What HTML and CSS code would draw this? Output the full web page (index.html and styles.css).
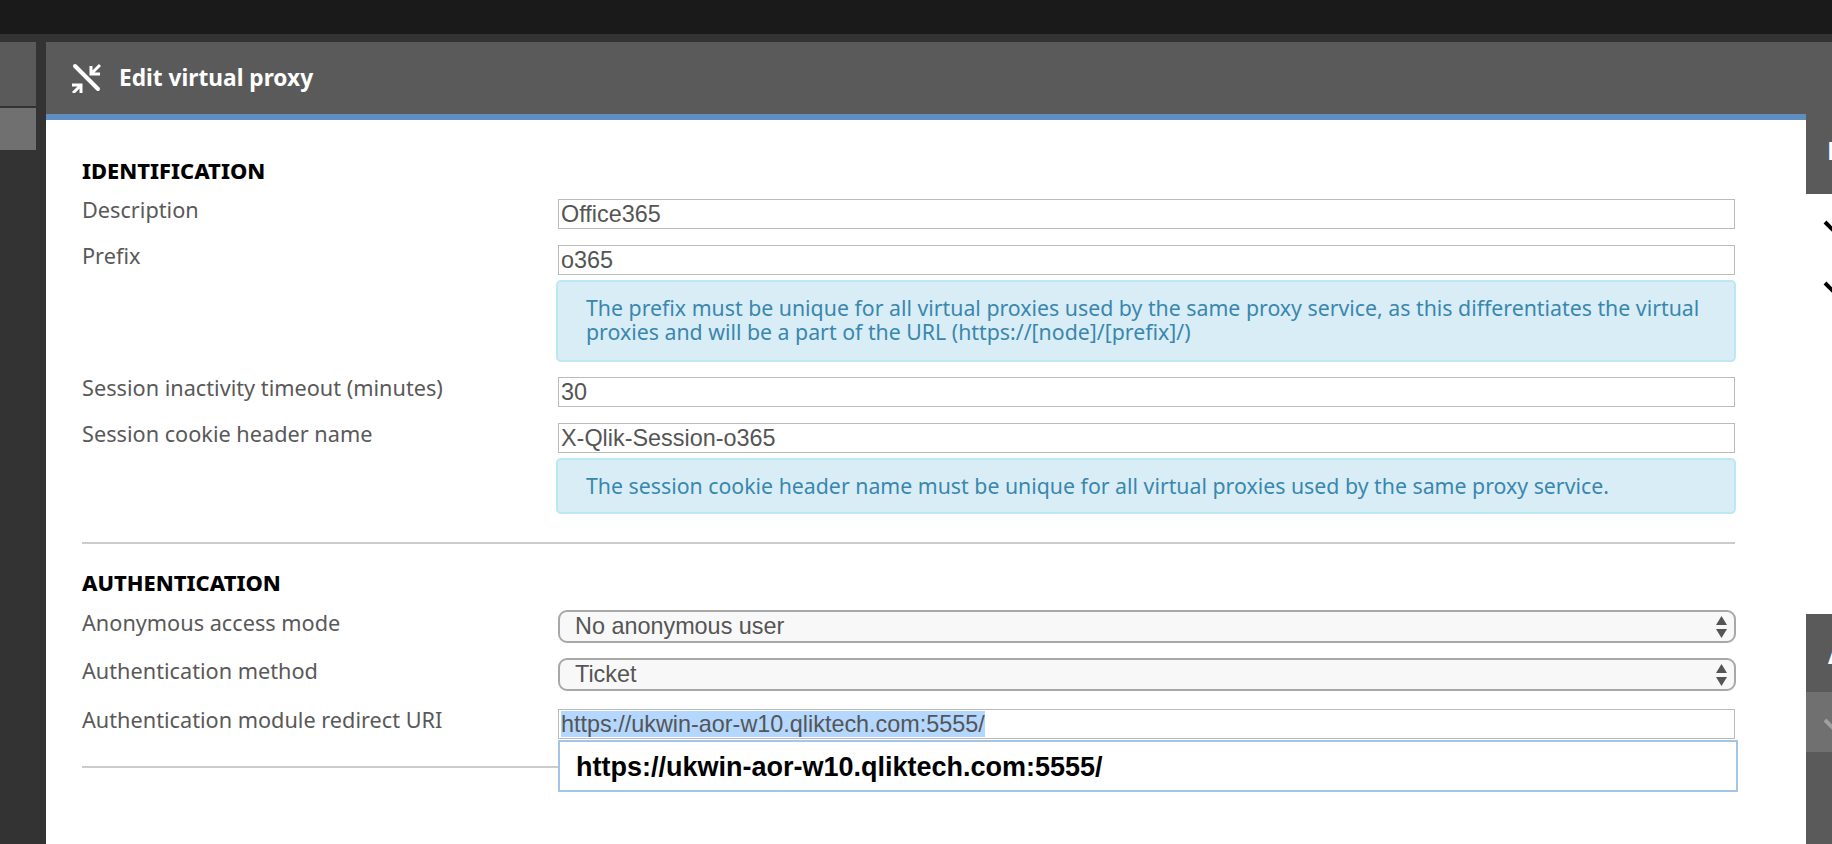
FILE: index.html
```html
<!DOCTYPE html>
<html lang="en">
<head>
    <meta charset="UTF-8">
    <meta name="viewport" content="width=device-width, initial-scale=1.0">
    <title>Edit virtual proxy</title>
    <link rel="stylesheet" href="styles.css">
</head>
<body>
    <div class="top-bar"></div>
    <div class="workspace">
        <div class="left-rail">
            <div class="left-tile"></div>
            <div class="left-tile active"></div>
        </div>

        <main class="panel">
            <header class="panel-header">
                <svg class="panel-icon" width="30" height="30" viewBox="0 0 30 30" fill="none" stroke="#fff" stroke-width="3">
                    <path d="M4 3 L27 26" stroke-width="4" stroke-linecap="round"/>
                    <path d="M20 3 V11 H29 M20 11 L29 2"/>
                    <path d="M1 22 H10 V30 M10 22 L2 30"/>
                </svg>
                <h1>Edit virtual proxy</h1>
            </header>

            <div class="panel-body">
                <section class="form-section">
                    <h2>IDENTIFICATION</h2>
                    <div class="form-row">
                        <label>Description</label>
                        <div class="field-col">
                            <div class="text-field">Office365</div>
                        </div>
                    </div>
                    <div class="form-row note-row">
                        <label>Prefix</label>
                        <div class="field-col">
                            <div class="text-field">o365</div>
                            <div class="note note-tall">The prefix must be unique for all virtual proxies used by the same proxy service, as this differentiates the virtual proxies and will be a part of the URL (https://[node]/[prefix]/)</div>
                        </div>
                    </div>
                    <div class="form-row">
                        <label>Session inactivity timeout (minutes)</label>
                        <div class="field-col">
                            <div class="text-field">30</div>
                        </div>
                    </div>
                    <div class="form-row note-row">
                        <label>Session cookie header name</label>
                        <div class="field-col">
                            <div class="text-field">X-Qlik-Session-o365</div>
                            <div class="note">The session cookie header name must be unique for all virtual proxies used by the same proxy service.</div>
                        </div>
                    </div>
                </section>

                <section class="form-section auth-section">
                    <h2>AUTHENTICATION</h2>
                    <div class="form-row select-row">
                        <label>Anonymous access mode</label>
                        <div class="field-col">
                            <div class="select-field">
                                <span>No anonymous user</span>
                                <svg width="11" height="22" viewBox="0 0 11 22" fill="#555"><path d="M5.5 0 L11 9 H0 Z M0 13 H11 L5.5 22 Z"/></svg>
                            </div>
                        </div>
                    </div>
                    <div class="form-row select-row">
                        <label>Authentication method</label>
                        <div class="field-col">
                            <div class="select-field">
                                <span>Ticket</span>
                                <svg width="11" height="22" viewBox="0 0 11 22" fill="#555"><path d="M5.5 0 L11 9 H0 Z M0 13 H11 L5.5 22 Z"/></svg>
                            </div>
                        </div>
                    </div>
                    <div class="form-row redirect-row">
                        <label>Authentication module redirect URI</label>
                        <div class="field-col">
                            <div class="text-field"><span class="selected-text">https://ukwin-aor-w10.qliktech.com:5555/</span></div>
                            <div class="autocomplete">https://ukwin-aor-w10.qliktech.com:5555/</div>
                        </div>
                    </div>
                </section>
            </div>
        </main>

        <aside class="right-rail">
            <div class="rail-tile rail-top">E</div>
            <div class="rail-list">
                <svg class="rail-chevron" width="26" height="26" viewBox="0 0 26 26" fill="none" stroke="#000" stroke-width="4"><path d="M19 2 L30 13 L41 2"/></svg>
                <svg class="rail-chevron" width="26" height="26" viewBox="0 0 26 26" fill="none" stroke="#000" stroke-width="4"><path d="M19 2 L30 13 L41 2"/></svg>
            </div>
            <div class="rail-tile rail-a">A</div>
            <div class="rail-tile rail-light">
                <svg class="rail-chevron" width="26" height="26" viewBox="0 0 26 26" fill="none" stroke="#a0a0a0" stroke-width="4"><path d="M19 2 L30 13 L41 2"/></svg>
            </div>
            <div class="rail-tile rail-rest"></div>
        </aside>
    </div>
</body>
</html>
```
FILE: styles.css
```css
html, body {
    height: 844px;
    overflow: hidden;
}
body {
    margin: 0;
    background-color: #333333;
    font-family: "Noto Sans", Arial, sans-serif;
}
.top-bar {
    height: 34px;
    background-color: #1a1a1a;
}
.workspace {
    display: flex;
    height: 802px;
    margin-top: 8px;
}

/* left stubs */
.left-rail {
    width: 36px;
    margin-right: 10px;
    display: flex;
    flex-direction: column;
    gap: 2px;
}
.left-tile {
    height: 64px;
    background-color: #5a5a5a;
}
.left-tile.active {
    height: 42px;
    background-color: #707070;
}

/* main panel */
.panel {
    width: 1760px;
    background-color: white;
}
.panel-header {
    height: 72px;
    background-color: #5a5a5a;
    border-bottom: 6px solid #5f8fc0;
    display: flex;
    align-items: center;
    padding-left: 25px;
}
.panel-icon {
    margin-right: 18px;
}
.panel-header h1 {
    margin: 0 0 2px;
    font-size: 22.7px;
    font-weight: 700;
    color: white;
}
.panel-body {
    padding: 38px 71px 0 36px;
}
.form-section h2 {
    margin: 0;
    height: 41px;
    line-height: 26px;
    font-size: 21.9px;
    font-weight: 800;
    color: black;
}
.auth-section {
    margin-top: 28px;
    border-top: 2px solid #cccccc;
    border-bottom: 2px solid #cccccc;
    padding: 26px 0 27px;
}
.auth-section h2 {
    height: 40px;
}
.form-row {
    display: flex;
    margin-bottom: 16px;
}
.form-row label {
    width: 476px;
    flex-shrink: 0;
    font-size: 21.7px;
    line-height: 24px;
    color: #595959;
    margin-top: -1px;
}
.note-row {
    margin-bottom: 15px;
}
.field-col {
    flex: 1;
    position: relative;
}
.text-field {
    height: 30px;
    box-sizing: border-box;
    border: 1px solid #bbbbbb;
    padding: 0 1px 0 2px;
    font-family: "Liberation Sans", Arial, sans-serif;
    font-size: 23.4px;
    line-height: 28px;
    color: #555555;
}
.note {
    box-sizing: border-box;
    height: 56px;
    margin: 5px -1px 0 -2px;
    padding: 14px 28px 0;
    background-color: #d9edf7;
    border: 2px solid #bce8f1;
    border-radius: 5px;
    font-size: 21.3px;
    line-height: 24px;
    color: #3a87ad;
}
.note-tall {
    height: 82px;
}

/* selects */
.select-row {
    margin-bottom: 15px;
}
.select-row label {
    margin-top: 1px;
}
.select-field {
    height: 33px;
    box-sizing: border-box;
    margin-right: -1px;
    border: 2px solid #a8a8a8;
    border-radius: 9px;
    background-color: #f8f8f8;
    display: flex;
    align-items: center;
    justify-content: space-between;
    padding: 0 7px 0 15px;
    font-family: "Liberation Sans", Arial, sans-serif;
    font-size: 23.4px;
    color: #555555;
}
.redirect-row {
    margin: 18px 0 0;
}
.selected-text {
    background-color: #b3d7ff;
}
.autocomplete {
    position: absolute;
    top: 31px;
    left: 0;
    right: -3px;
    height: 52px;
    box-sizing: border-box;
    border: 2px solid #a3c6e8;
    background-color: white;
    padding-left: 16px;
    font-family: "Liberation Sans", Arial, sans-serif;
    font-size: 27px;
    font-weight: 700;
    line-height: 51px;
    color: black;
}

/* right stubs */
.right-rail {
    width: 26px;
    display: flex;
    flex-direction: column;
    overflow: hidden;
    background-color: white;
}
.rail-tile {
    background-color: #5a5a5a;
    color: white;
    font-size: 25px;
    font-weight: 700;
    box-sizing: border-box;
    overflow: hidden;
}
.rail-top {
    height: 152px;
    padding: 91px 0 0 21px;
    line-height: 34px;
}
.rail-list {
    height: 420px;
    padding-top: 26px;
    box-sizing: border-box;
    display: flex;
    flex-direction: column;
    gap: 35px;
}
.rail-chevron {
    display: block;
    flex-shrink: 0;
}
.rail-a {
    height: 78px;
    padding: 28px 0 0 22px;
    line-height: 24px;
}
.rail-light {
    height: 60px;
    padding-top: 26px;
    background-color: #707070;
}
.rail-rest {
    height: 92px;
}
```
